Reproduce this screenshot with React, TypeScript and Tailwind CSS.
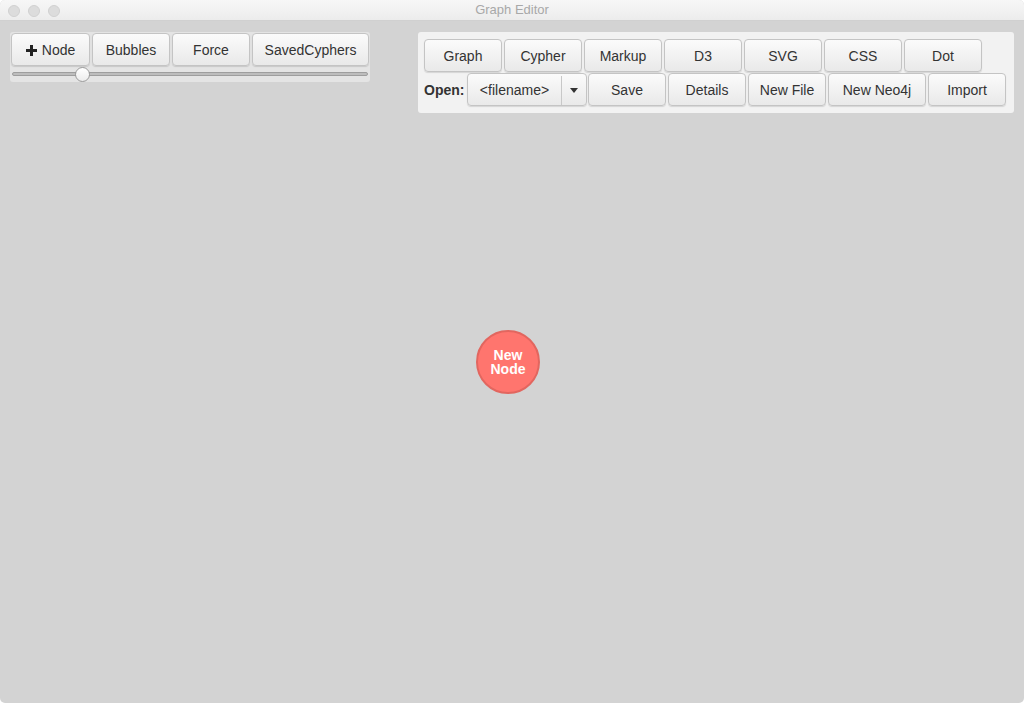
const font = { fontFamily: '"Liberation Sans", Arial, sans-serif' };

function Btn({ label, w, className = '' }: { label: React.ReactNode; w: string; className?: string }) {
  return (
    <button
      className={`${w} h-[33px] shrink-0 flex items-center justify-center pt-[2px] rounded-[4px] border border-[#c4c4c4] bg-gradient-to-b from-[#fbfbfb] to-[#e9e9e9] text-[14px] text-[#333] shadow-[0_1px_1px_rgba(0,0,0,0.12)] ${className}`}
    >
      {label}
    </button>
  );
}

function TitleBar() {
  return (
    <div className="relative h-[21px] flex items-center justify-center bg-gradient-to-b from-[#f7f7f7] to-[#ececec] border-b border-[#d0d0d0]">
      <div className="absolute left-[8px] top-[5px] flex gap-[8px]">
        <span className="w-[12px] h-[12px] rounded-full bg-[#dcdcdc] border border-[#d0d0d0]" />
        <span className="w-[12px] h-[12px] rounded-full bg-[#dcdcdc] border border-[#d0d0d0]" />
        <span className="w-[12px] h-[12px] rounded-full bg-[#dcdcdc] border border-[#d0d0d0]" />
      </div>
      <span className="text-[13px] text-[#a8a8a8]">Graph Editor</span>
    </div>
  );
}

function LeftPanel() {
  return (
    <div className="w-[360px] h-[50px] rounded-[3px] bg-[#e4e4e4] pt-[1px] px-[1px]">
      <div className="flex gap-[2px]">
        <Btn
          w="w-[79px]"
          label={
            <span className="flex items-center gap-[5px]">
              <svg width="11" height="11" viewBox="0 0 11 11">
                <rect x="4" y="0" width="3" height="11" fill="#222" />
                <rect x="0" y="4" width="11" height="3" fill="#222" />
              </svg>
              Node
            </span>
          }
        />
        <Btn w="w-[78px]" label="Bubbles" />
        <Btn w="w-[78px]" label="Force" />
        <Btn w="w-[117px]" label="SavedCyphers" />
      </div>
      <div className="relative h-[16px] mx-[1px]">
        <div className="absolute left-0 right-0 top-[6px] h-[4px] rounded-full bg-[#bdbdbd] border border-[#9e9e9e]" />
        <div className="absolute left-[63px] top-[1px] w-[15px] h-[15px] rounded-full border border-[#9a9a9a] bg-gradient-to-b from-[#ffffff] to-[#ececec]" />
      </div>
    </div>
  );
}

function RightPanel() {
  const top = ['Graph', 'Cypher', 'Markup', 'D3', 'SVG', 'CSS', 'Dot'];
  return (
    <div className="w-[596px] rounded-[3px] bg-[#f2f2f2] pt-[7px] pb-[7px] pl-[6px]">
      <div className="flex gap-[2px]">
        {top.map((t) => (
          <Btn key={t} w="w-[78px]" label={t} />
        ))}
      </div>
      <div className="flex items-center mt-[1px]">
        <span className="w-[43px] pt-[2px] text-[14px] font-bold text-[#333]">Open:</span>
        <div className="flex h-[33px] w-[120px] shrink-0 pt-[2px] rounded-[4px] border border-[#c4c4c4] bg-gradient-to-b from-[#fbfbfb] to-[#e9e9e9] text-[14px] text-[#333] shadow-[0_1px_1px_rgba(0,0,0,0.12)]">
          <span className="w-[94px] flex items-center justify-center border-r border-[#c8c8c8]">&lt;filename&gt;</span>
          <span className="flex-1 flex items-center justify-center">
            <svg width="8" height="5" viewBox="0 0 8 5">
              <path d="M0 0 H8 L4 5 Z" fill="#333" />
            </svg>
          </span>
        </div>
        <div className="flex gap-[2px] ml-[1px]">
          <Btn w="w-[78px]" label="Save" />
          <Btn w="w-[78px]" label="Details" />
          <Btn w="w-[78px]" label="New File" />
          <Btn w="w-[98px]" label="New Neo4j" />
          <Btn w="w-[78px]" label="Import" />
        </div>
      </div>
    </div>
  );
}

export default function App() {
  return (
    <div style={font} className="w-[1024px] h-[703px] flex flex-col overflow-hidden rounded-[5px] bg-[#d3d3d3]">
      <TitleBar />
      <div className="relative flex-1">
        <div className="flex justify-between items-start pt-[11px] pl-[10px] pr-[10px]">
          <LeftPanel />
          <RightPanel />
        </div>
        <div className="absolute left-[476px] top-[309px] w-[64px] h-[64px] rounded-full bg-[#ff756e] border-2 border-[#e2665f] flex items-center justify-center text-center text-white font-bold text-[14px] leading-[14px]">
          New
          <br />
          Node
        </div>
      </div>
    </div>
  );
}
